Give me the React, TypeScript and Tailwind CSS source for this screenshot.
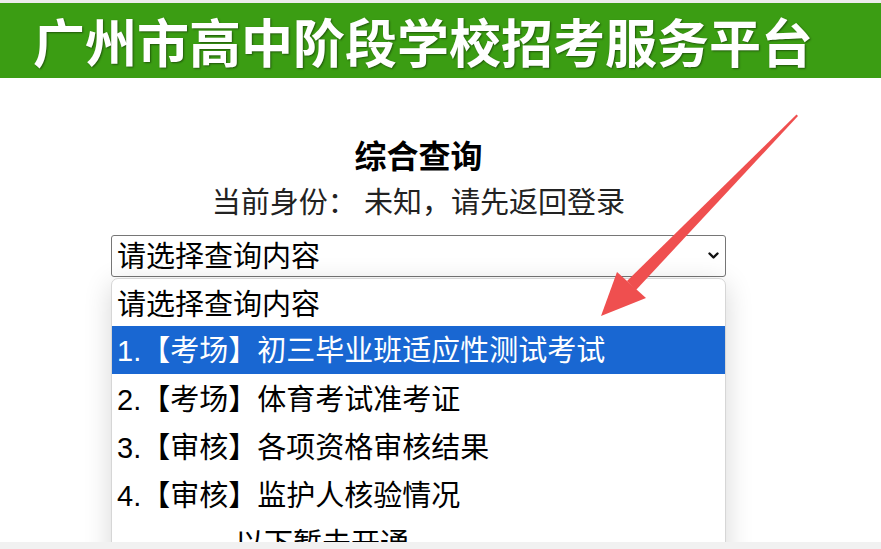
import React from "react";

const options = [
  "1.【考场】初三毕业班适应性测试考试",
  "2.【考场】体育考试准考证",
  "3.【审核】各项资格审核结果",
  "4.【审核】监护人核验情况",
];

export default function App() {
  return (
    <div className="relative w-[881px] h-[549px] overflow-hidden bg-white flex flex-col">
      <div className="h-[3px] bg-[#ececec] shrink-0" />
      <header className="h-[75px] shrink-0 bg-[#3b9d13] flex items-center pl-[33px]">
        <h1
          className="text-white font-bold text-[52px] leading-none [text-shadow:1px_1px_2px_rgba(0,0,0,0.45)]"
          style={{ fontFamily: '"Noto Sans CJK SC", sans-serif' }}
        >
          广州市高中阶段学校招考服务平台
        </h1>
      </header>
      <main className="flex-1 overflow-hidden">
        <div className="ml-[111px] w-[615px] pt-[56px] flex flex-col">
          <h2
            className="text-center font-bold text-[32px] leading-[40px] text-black"
            style={{ fontFamily: '"Noto Sans CJK SC", sans-serif' }}
          >
            综合查询
          </h2>
          <p
            className="mt-[9px] text-center text-[29px] leading-[40px] text-[#222]"
            style={{ fontFamily: '"Liberation Serif", "Noto Sans CJK SC", serif' }}
          >
            当前身份： 未知，请先返回登录
          </p>
          <div
            className="mt-[12px] h-[42px] border border-[#767676] rounded-[3px] flex items-center justify-between pl-[5px] pr-[6px] text-[29px] text-black"
            style={{ fontFamily: '"Liberation Sans", "Noto Sans CJK SC", sans-serif' }}
          >
            <span className="leading-none pt-[3px]">请选择查询内容</span>
            <svg width="11" height="8" viewBox="0 0 11 8">
              <path d="M1.5 1.5 L5.5 5.5 L9.5 1.5" fill="none" stroke="#111" strokeWidth="2.4" strokeLinecap="round" strokeLinejoin="round" />
            </svg>
          </div>
          <div
            className="mt-[1px] border border-[#d6d6d6] rounded-t-[7px] bg-white pt-[1px] shadow-[0_6px_28px_rgba(0,0,0,0.16)] text-[29px] text-black"
            style={{ fontFamily: '"Liberation Sans", "Noto Sans CJK SC", sans-serif' }}
          >
            <div className="h-[46px] flex items-center pl-[5px] pt-[5px]">请选择查询内容</div>
            {options.map((o, i) => (
              <div
                key={o}
                className={
                  i === 0
                    ? "h-[48px] flex items-center pl-[5px] pt-[4px] bg-[#1967d2] text-white"
                    : "h-[48px] flex items-center pl-[5px] pt-[5px]"
                }
              >
                {o}
              </div>
            ))}
            <div className="h-[48px] flex items-center pl-[123px] pt-[5px]">以下暂未开通</div>
          </div>
        </div>
      </main>
      <div className="h-[7px] bg-[#f1f1f1] shrink-0" />
      <svg
        className="absolute inset-0 pointer-events-none"
        width="881"
        height="549"
        viewBox="0 0 881 549"
      >
        <polygon points="796.5,114.5 798,116 636,290 627,281" fill="#ef4f4f" />
        <polygon points="601,316 617,272 646,298" fill="#ef4f4f" />
      </svg>
    </div>
  );
}
